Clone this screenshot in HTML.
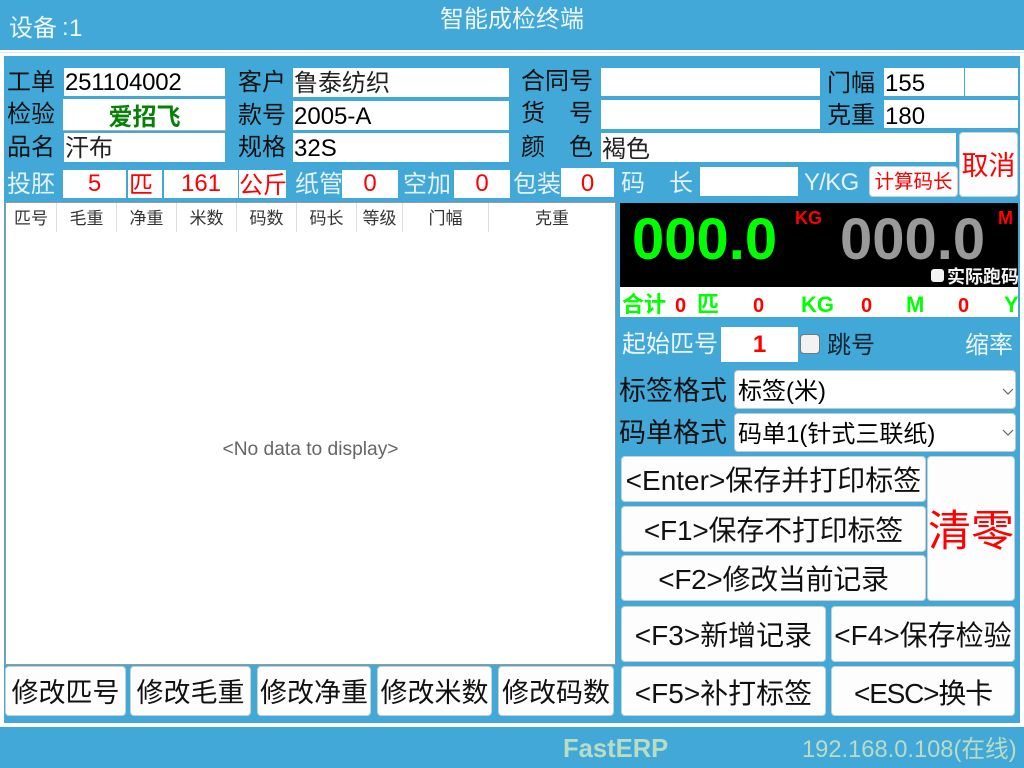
<!DOCTYPE html>
<html><head><meta charset="utf-8">
<style>
html,body{margin:0;padding:0;width:1024px;height:768px;overflow:hidden;background:#fff}
body{position:relative;font-family:"Liberation Sans","Noto Sans CJK SC",sans-serif;font-size:24px;color:#000}
div{position:absolute;box-sizing:border-box;white-space:nowrap}
.l{font-size:24px;line-height:30px;height:30px;color:#111}
.w{color:#e6f2f8}
.i{background:#fff;line-height:31px;padding-left:1px;font-size:24px;overflow:hidden}
.r{color:#f00;text-align:center;padding:0}
.b{background:#fdfdfd;border:1px solid #c8d0d4;border-radius:4px;text-align:center;font-size:28px;color:#111}
.h{top:203px;height:29px;line-height:31px;font-size:17px;text-align:center;color:#333;border-right:1px solid #ddd}
.s{background:#fff;border:1px solid #c4c8ca;border-radius:4px;left:734px;width:282px;height:39px;font-size:24px;line-height:41px;padding-left:3px}
.g{font-weight:bold;color:#0f0;font-size:22px;line-height:30px;top:290px}
.q{font-weight:bold;color:#f00;font-size:20px;line-height:30px;top:291px}
</style></head><body>
<div style="left:0;top:0;width:1024px;height:50px;background:#41a8d8"></div>
<div style="left:9px;top:12px;font-size:24px;line-height:34px;color:#eef7fb">设备</div>
<div style="left:62px;top:11px;font-size:24px;line-height:34px;color:#eef7fb">:</div>
<div style="left:69px;top:12px;font-size:24px;line-height:34px;color:#eef7fb">1</div>
<div style="left:440px;top:4px;font-size:24px;line-height:32px;color:#eef7fb">智能成检终端</div>
<div style="left:0;top:52px;width:1024px;height:675px;background:#fff;border-top:1px solid #e4e4e4"></div>
<div style="left:4px;top:56px;width:1016px;height:667px;background:#41a8d8"></div>
<div style="left:0;top:727px;width:1024px;height:41px;background:#41a8d8"></div>
<div style="left:563px;top:732px;font-size:25.6px;line-height:34px;font-weight:bold;color:#b9dcc4">FastERP</div>
<div style="left:802px;top:733px;font-size:23.7px;line-height:34px;color:#b9dcc4">192.168.0.108(在线)</div>

<div class="l" style="left:7px;top:68px">工单</div>
<div class="l" style="left:7px;top:100px">检验</div>
<div class="l" style="left:7px;top:133px">品名</div>
<div class="l w" style="left:7px;top:170px">投胚</div>
<div class="i" style="left:64px;top:68px;width:161px;height:28px;line-height:29px;letter-spacing:-.2px">251104002</div>
<div class="i" style="left:63px;top:99px;width:163px;height:32px;border-bottom:1px solid #aaa;border-right:1px solid #aaa;text-align:center;font-weight:bold;color:#078007;line-height:38px">爱招飞</div>
<div class="i" style="left:64px;top:133px;width:161px;height:29px;color:#222;line-height:32px">汗布</div>

<div class="l" style="left:238px;top:68px">客户</div>
<div class="l" style="left:238px;top:101px">款号</div>
<div class="l" style="left:238px;top:133px">规格</div>
<div class="i" style="left:293px;top:68px;width:216px;height:29px;color:#222;line-height:32px">鲁泰纺织</div>
<div class="i" style="left:293px;top:101px;width:216px;height:29px;line-height:32px">2005-A</div>
<div class="i" style="left:293px;top:133px;width:216px;height:29px">32S</div>

<div class="l" style="left:521px;top:67px">合同号</div>
<div class="l" style="left:521px;top:99px">货</div><div class="l" style="left:569px;top:99px">号</div>
<div class="l" style="left:521px;top:133px">颜</div><div class="l" style="left:569px;top:133px">色</div>
<div class="i" style="left:601px;top:68px;width:219px;height:28px"></div>
<div class="i" style="left:601px;top:100px;width:219px;height:29px"></div>
<div class="i" style="left:601px;top:133px;width:355px;height:29px;color:#222;line-height:33px">褐色</div>

<div class="l" style="left:827px;top:69px">门幅</div>
<div class="l" style="left:827px;top:101px">克重</div>
<div class="i" style="left:884px;top:68px;width:80px;height:28px;line-height:32px">155</div>
<div class="i" style="left:965px;top:68px;width:53px;height:28px"></div>
<div class="i" style="left:884px;top:100px;width:134px;height:28px;line-height:33px">180</div>
<div class="b" style="left:959px;top:132px;width:59px;height:65px;color:#f00;font-size:27px;line-height:66px">取消</div>

<div class="i r" style="left:63px;top:170px;width:63px;height:28px;line-height:28px">5</div>
<div class="i r" style="left:128px;top:170px;width:34px;height:28px;text-align:left;padding-left:1px">匹</div>
<div class="i r" style="left:164px;top:170px;width:74px;height:28px;line-height:28px">161</div>
<div class="i r" style="left:239px;top:170px;width:47px;height:28px">公斤</div>
<div class="l w" style="left:295px;top:170px">纸管</div>
<div class="i r" style="left:342px;top:170px;width:56px;height:28px;line-height:28px">0</div>
<div class="l w" style="left:403px;top:170px">空加</div>
<div class="i r" style="left:454px;top:170px;width:56px;height:28px;line-height:28px">0</div>
<div class="l w" style="left:513px;top:170px">包装</div>
<div class="i r" style="left:561px;top:168px;width:53px;height:29px">0</div>
<div class="l w" style="left:621px;top:169px">码</div><div class="l w" style="left:669px;top:169px">长</div>
<div class="i" style="left:700px;top:167px;width:98px;height:29px"></div>
<div class="l w" style="left:804px;top:168px;letter-spacing:-.7px">Y/KG</div>
<div class="b" style="left:869px;top:166px;width:89px;height:31px;color:#f00;font-size:19.5px;line-height:31px">计算码长</div>

<div style="left:5px;top:202px;width:611px;height:463px;background:#fff;border:1px solid #999"></div>
<div class="h" style="left:6px;width:51px">匹号</div>
<div class="h" style="left:57px;width:60px">毛重</div>
<div class="h" style="left:117px;width:60px">净重</div>
<div class="h" style="left:177px;width:60px">米数</div>
<div class="h" style="left:237px;width:60px">码数</div>
<div class="h" style="left:297px;width:60px">码长</div>
<div class="h" style="left:357px;width:46px">等级</div>
<div class="h" style="left:403px;width:86px">门幅</div>
<div class="h" style="left:489px;width:126px;border:0">克重</div>
<div style="left:6px;top:438px;width:609px;text-align:center;font-size:19.2px;line-height:24px;color:#666">&lt;No data to display&gt;</div>

<div class="b" style="left:5px;top:666px;width:121px;height:50px;line-height:53px;font-size:27px">修改匹号</div>
<div class="b" style="left:130px;top:666px;width:121px;height:50px;line-height:53px;font-size:27px">修改毛重</div>
<div class="b" style="left:257px;top:666px;width:114px;height:50px;line-height:53px;font-size:27px">修改净重</div>
<div class="b" style="left:377px;top:666px;width:115px;height:50px;line-height:53px;font-size:27px">修改米数</div>
<div class="b" style="left:498px;top:666px;width:116px;height:50px;line-height:53px;font-size:27px">修改码数</div>

<div style="left:620px;top:203px;width:398px;height:84px;background:#000"></div>
<div style="left:632px;top:202px;font-size:58px;line-height:76px;font-weight:bold;color:#0f0">000.0</div>
<div style="left:840px;top:202px;font-size:58px;line-height:76px;font-weight:bold;color:#999">000.0</div>
<div style="left:795px;top:206px;font-size:18px;line-height:24px;font-weight:bold;color:#f00">KG</div>
<div style="left:998px;top:206px;font-size:18px;line-height:24px;font-weight:bold;color:#f00">M</div>
<div style="left:931px;top:269px;width:13px;height:13px;background:#f2f2f2;border-radius:3px"></div>
<div style="left:947px;top:266px;font-size:18px;line-height:22px;font-weight:bold;color:#f4f4f4">实际跑码</div>

<div style="left:620px;top:287px;width:398px;height:30px;background:#fff"></div>
<div class="g" style="left:622px">合计</div><div class="q" style="left:675px">0</div>
<div class="g" style="left:697px">匹</div><div class="q" style="left:753px">0</div>
<div class="g" style="left:801px">KG</div><div class="q" style="left:861px">0</div>
<div class="g" style="left:906px">M</div><div class="q" style="left:958px">0</div>
<div class="g" style="left:1004px">Y</div>

<div class="l" style="left:622px;top:330px;color:#eef7fb">起始匹号</div>
<div class="i r" style="left:721px;top:327px;width:77px;height:35px;font-weight:bold;line-height:35px;font-size:24px">1</div>
<div style="left:800px;top:334px;width:20px;height:20px;background:#f2f2f2;border:1px solid #777;border-radius:4px"></div>
<div class="l" style="left:827px;top:331px;color:#0d2230">跳号</div>
<div class="l" style="left:965px;top:331px;font-size:24px;color:#eef7fb">缩率</div>

<div style="left:619px;top:375px;font-size:27px;line-height:32px;color:#111">标签格式</div>
<div style="left:619px;top:417px;font-size:27px;line-height:32px;color:#111">码单格式</div>
<div class="s" style="top:370px">标签(米)</div>
<div class="s" style="top:413px">码单1(针式三联纸)</div>
<svg style="position:absolute;left:1002px;top:386px" width="12" height="60" viewBox="0 0 12 60"><path d="M1 3l5 5 5-5M1 44l5 5 5-5" fill="none" stroke="#666" stroke-width="1.2"/></svg>

<div class="b" style="left:621px;top:456px;width:305px;height:46px;line-height:47px">&lt;Enter&gt;保存并打印标签</div>
<div class="b" style="left:621px;top:506px;width:305px;height:46px;line-height:48px;letter-spacing:-.2px">&lt;F1&gt;保存不打印标签</div>
<div class="b" style="left:621px;top:555px;width:305px;height:46px;line-height:48px;letter-spacing:-.3px">&lt;F2&gt;修改当前记录</div>
<div class="b" style="left:927px;top:456px;width:88px;height:145px;color:#f00;font-size:43px;line-height:150px">清零</div>
<div class="b" style="left:621px;top:606px;width:205px;height:56px;line-height:58px">&lt;F3&gt;新增记录</div>
<div class="b" style="left:831px;top:606px;width:184px;height:56px;line-height:58px">&lt;F4&gt;保存检验</div>
<div class="b" style="left:621px;top:666px;width:205px;height:50px;line-height:53px">&lt;F5&gt;补打标签</div>
<div class="b" style="left:831px;top:666px;width:184px;height:50px;line-height:53px;letter-spacing:-1.2px">&lt;ESC&gt;换卡</div>
</body></html>
